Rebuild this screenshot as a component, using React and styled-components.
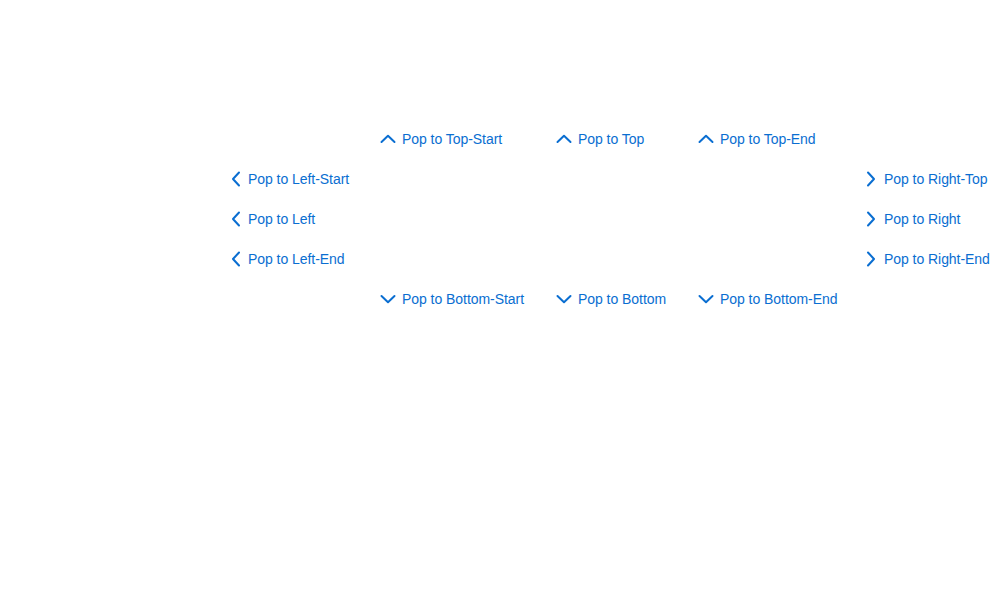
import styled, { createGlobalStyle } from "styled-components";

const GlobalStyle = createGlobalStyle`
	body {
		margin: 0;
		background: #ffffff;
		font-family: "Liberation Sans", Arial, sans-serif;
	}
`;

const paths = {
	up: "M1.5 11 L8 4.8 L14.5 11",
	down: "M1.5 5 L8 11.2 L14.5 5",
	left: "M13 1.5 L7 8 L13 14.5",
	right: "M6 1.5 L12 8 L6 14.5",
};

const Chevron = ({ dir }) => (
	<IconBox viewBox="0 0 16 16">
		<path d={paths[dir]} />
	</IconBox>
);

const items = [
	{ row: 1, col: 2, dir: "up", label: "Pop to Top-Start" },
	{ row: 1, col: 3, dir: "up", label: "Pop to Top" },
	{ row: 1, col: 4, dir: "up", label: "Pop to Top-End" },
	{ row: 2, col: 1, dir: "left", label: "Pop to Left-Start" },
	{ row: 3, col: 1, dir: "left", label: "Pop to Left" },
	{ row: 4, col: 1, dir: "left", label: "Pop to Left-End" },
	{ row: 2, col: 5, dir: "right", label: "Pop to Right-Top" },
	{ row: 3, col: 5, dir: "right", label: "Pop to Right" },
	{ row: 4, col: 5, dir: "right", label: "Pop to Right-End" },
	{ row: 5, col: 2, dir: "down", label: "Pop to Bottom-Start" },
	{ row: 5, col: 3, dir: "down", label: "Pop to Bottom" },
	{ row: 5, col: 4, dir: "down", label: "Pop to Bottom-End" },
];

const App = () => {
	return (
		<Page>
			<GlobalStyle />
			<PopGrid>
				{items.map(item => (
					<PopButton key={item.label} $row={item.row} $col={item.col}>
						<Chevron dir={item.dir} />
						<Label>{item.label}</Label>
					</PopButton>
				))}
			</PopGrid>
		</Page>
	);
};

const Page = styled.div`
	width: 1006px;
	height: 600px;
	padding-top: 119px;
	box-sizing: border-box;
`;

const PopGrid = styled.div`
	display: grid;
	grid-template-columns: 154px 176px 142px 164px auto;
	grid-template-rows: repeat(5, 40px);
	margin-left: 226px;
`;

const PopButton = styled.button`
	grid-row: ${p => p.$row};
	grid-column: ${p => p.$col};
	display: flex;
	align-items: center;
	gap: 6px;
	padding: 0;
	border: none;
	background: transparent;
	color: #0a6ed1;
	font-family: inherit;
	font-size: 14px;
	letter-spacing: -0.05px;
	cursor: pointer;
	justify-self: start;
`;

const IconBox = styled.svg`
	width: 16px;
	height: 16px;
	fill: none;
	stroke: #0a6ed1;
	stroke-width: 2;
	stroke-linecap: round;
	stroke-linejoin: round;
`;

const Label = styled.span`
	white-space: nowrap;
`;

export default App;
